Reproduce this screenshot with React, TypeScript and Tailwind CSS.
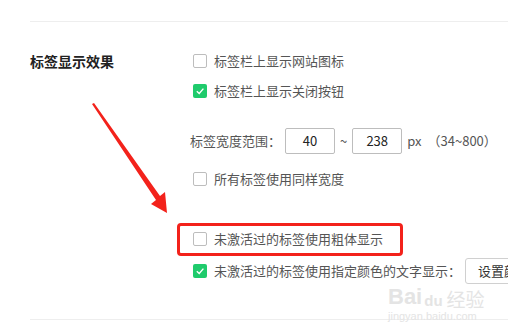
import React from 'react';

const Check: React.FC<{ on?: boolean }> = ({ on }) =>
  on ? (
    <span className="w-[14px] h-[14px] rounded-[2px] bg-[#1fcb6c] flex items-center justify-center shrink-0">
      <svg width="10" height="10" viewBox="0 0 10 10">
        <path d="M1.8 5.2 L4.2 7.4 L8.4 2.6" stroke="#fff" strokeWidth="1.4" fill="none" />
      </svg>
    </span>
  ) : (
    <span className="w-[14px] h-[14px] rounded-[2px] border border-[#bdbdbd] bg-white shrink-0" />
  );

const Row: React.FC<{ on?: boolean; label: string; className?: string; children?: React.ReactNode }> = ({
  on,
  label,
  className,
  children,
}) => (
  <div className={`flex items-center h-[30px] ${className ?? ''}`}>
    <Check on={on} />
    <span className="ml-[7px] text-[13px] text-[#555] whitespace-nowrap">{label}</span>
    {children}
  </div>
);

const App: React.FC = () => {
  return (
    <div
      className="relative w-[508px] h-[331px] overflow-hidden bg-white"
      style={{ fontFamily: '"Noto Sans CJK SC", "Noto Sans", sans-serif' }}
    >
      <div className="h-[21px]" />
      <div className="ml-[30px] border-t border-[#eeeeee]" />

      <div className="flex pl-[30px] pt-[24px]">
        <div className="w-[163px] shrink-0 h-[30px] flex items-center text-[14px] font-bold text-[#222]">
          标签显示效果
        </div>
        <div className="flex-1 min-w-0">
          <Row label="标签栏上显示网站图标" />
          <Row on label="标签栏上显示关闭按钮" />

          <div className="flex items-center h-[26px] mt-[22px] -ml-[3px] text-[13px] text-[#555] whitespace-nowrap">
            <span>标签宽度范围：</span>
            <span className="ml-[4px] w-[50px] h-[26px] border border-[#bdbdbd] rounded-[2px] flex items-center justify-center text-[#222]">
              40
            </span>
            <span className="mx-[5px]">~</span>
            <span className="w-[50px] h-[26px] border border-[#bdbdbd] rounded-[2px] flex items-center justify-center text-[#222]">
              238
            </span>
            <span className="ml-[5px]">px</span>
            <span className="ml-[6px]">（34~800）</span>
          </div>

          <Row label="所有标签使用同样宽度" className="mt-[10px]" />
          <Row label="未激活过的标签使用粗体显示" className="mt-[30px]" />
          <Row on label="未激活过的标签使用指定颜色的文字显示：" className="mt-[2px]">
            <span className="ml-[4px] h-[26px] px-[12px] border border-[#d0d0d0] rounded-[3px] flex items-center text-[13px] text-[#333] whitespace-nowrap">
              设置颜色
            </span>
          </Row>
        </div>
      </div>

      <div className="ml-[30px] mt-[33px] border-t border-[#eeeeee]" />

      {/* annotation box */}
      <div className="absolute left-[177px] top-[223px] w-[226px] h-[33px] border-[3px] border-[#f3221b] rounded-[4px]" />

      {/* annotation arrow */}
      <svg className="absolute left-0 top-0" width="508" height="331" viewBox="0 0 508 331">
        <polygon points="92,104 94,103 160,196 165,192 167,213 151,204 156,200" fill="#f3221b" />
      </svg>

      {/* watermark */}
      <div className="absolute left-[388px] top-[286px] flex flex-col items-start leading-none text-[#e4e4e4]">
        <div className="flex items-end">
          <span className="text-[22px] font-bold" style={{ fontFamily: '"Liberation Sans", sans-serif' }}>
            Bai
          </span>
          <span className="text-[15px] font-bold ml-[2px]" style={{ fontFamily: '"Liberation Sans", sans-serif' }}>
            du
          </span>
          <span className="text-[19px] ml-[4px]">经验</span>
        </div>
        <span className="text-[11px] mt-[3px]" style={{ fontFamily: '"Liberation Sans", sans-serif' }}>
          jingyan.baidu.com
        </span>
      </div>
    </div>
  );
};

export default App;
